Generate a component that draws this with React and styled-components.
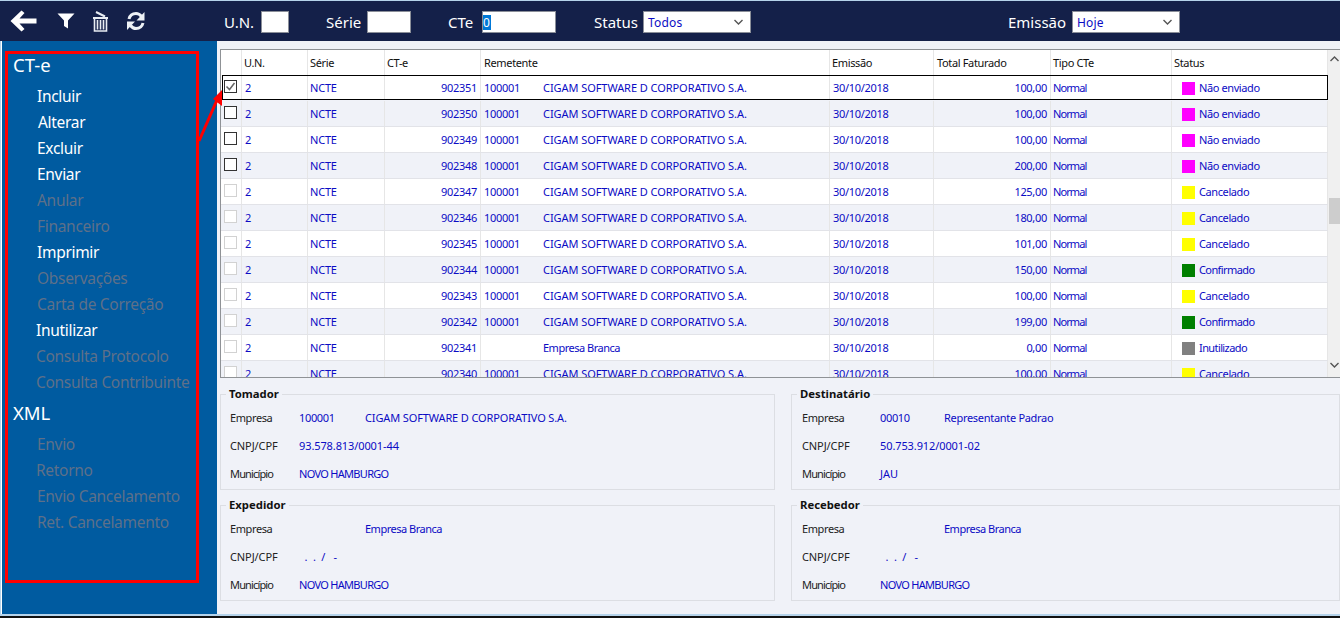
import React from 'react';
import styled, { createGlobalStyle } from 'styled-components';

const FONT = `"Noto Sans", "DejaVu Sans", sans-serif`;
const INK = '#0b0bc4';

const Global = createGlobalStyle`
  html, body { margin: 0; padding: 0; background: #000; }
  body { font-family: ${FONT}; overflow: hidden; }
  * { box-sizing: border-box; }
`;

const Win = styled.div`
  position: relative;
  width: 1340px;
  height: 618px;
  display: flex;
  flex-direction: column;
  background: #b5d3ea;
  padding-top: 1px;
  overflow: hidden;
`;
const Toolbar = styled.header`
  height: 40px;
  background: #142049;
  display: flex;
  align-items: center;
  flex: none;
`;
const IconBtn = styled.svg`
  flex: none;
  display: block;
  margin-left: ${p => p.$ml}px;
`;
const FilterGroup = styled.div`
  display: flex;
  align-items: center;
  gap: 6px;
  padding-top: 2px;
  margin-left: ${p => p.$ml}px;
`;
const FilterLabel = styled.span`
  color: #fff;
  font-size: 15px;
  line-height: 20px;
  width: ${p => p.$w}px;
  white-space: nowrap;
`;
const Field = styled.div`
  width: ${p => p.$w}px;
  height: 22px;
  background: #fff;
  border: 1px solid #8b8f99;
  display: flex;
  align-items: center;
  font-size: 12px;
  letter-spacing: 0.2px;
  color: ${INK};
`;
const Selected = styled.span`
  background: #0078d7;
  color: #fff;
  width: 8px;
  height: 15px;
  line-height: 15px;
`;
const SelectBox = styled(Field)`
  justify-content: space-between;
  padding: 0 7px 0 4px;
`;
const Body = styled.div`
  flex: 1;
  display: flex;
  min-height: 0;
  background: #fff;
  padding-left: 1px;
  border-left: 1px solid #b5d3ea;
`;
const Sidebar = styled.nav`
  width: 215px;
  flex: none;
  background: #005ba0;
  padding: 10px 0 0 3px;
`;
const Frame = styled.div`
  width: 194px;
  height: 532px;
  border: 3px solid #ff0000;
  padding: 0 0 0 5px;
  display: flex;
  flex-direction: column;
`;
const MenuHead = styled.div`
  color: #fff;
  font-size: 18.5px;
  line-height: 24px;
  margin-top: ${p => p.$mt}px;
  margin-bottom: 6px;
`;
const MenuItem = styled.div`
  height: 26px;
  line-height: 26px;
  font-size: 15.5px;
  letter-spacing: -0.3px;
  white-space: nowrap;
  margin-left: ${p => 24 + (p.$dx || 0)}px;
  color: ${p => (p.$off ? '#5e7089' : '#fff')};
`;
const Main = styled.main`
  flex: 1;
  min-width: 0;
  background: #f0f2f8;
  padding: 8px 0 0 3px;
`;
const GridFrame = styled.div`
  height: 329px;
  border: 1px solid #8f9296;
  border-right: 0;
  background: #fff;
  display: flex;
  overflow: hidden;
`;
const GridBody = styled.div`
  width: 1107px;
  flex: none;
  overflow: hidden;
`;
const COLS = '21px 66px 77px 96px 349px 104px 117px 121px 156px';
const HeadRow = styled.div`
  display: grid;
  grid-template-columns: ${COLS};
  height: 25px;
`;
const HeadCell = styled.div`
  font-size: 11px;
  line-height: 25px;
  letter-spacing: -0.35px;
  color: #111;
  padding-left: ${p => p.$pl}px;
  border-right: 1px solid #e6e6e6;
  white-space: nowrap;
`;
const Row = styled.div`
  display: grid;
  grid-template-columns: ${COLS};
  height: 26px;
  position: relative;
  background: ${p => (p.$alt ? '#f0f2f8' : '#fff')};
  border-bottom: 1px solid #e2e3e8;
  &[data-current='1'] {
    height: 25px;
    margin: 0 0 1px 1px;
    background: #fff;
    border-bottom: 0;
    outline: 1px solid #000;
    outline-offset: -1px;
    box-shadow: 0 1px 0 #f0f2f8;
    grid-template-columns: 20px 66px 77px 96px 349px 104px 117px 121px 156px;
  }
`;
const Cell = styled.div`
  font-size: 11px;
  line-height: 14px;
  color: ${INK};
  letter-spacing: ${p => p.$ls ?? -0.3}px;
  padding-top: 1px;
  padding-left: ${p => p.$pl}px;
  padding-right: ${p => p.$pr ?? 0}px;
  border-right: 1px solid #e6e6e6;
  white-space: nowrap;
  display: flex;
  align-items: center;
  justify-content: ${p => (p.$right ? 'flex-end' : 'flex-start')};
`;
const TickCell = styled.div`
  border-right: 1px solid #e6e6e6;
  padding: ${p => (p.$first ? '5px 0 0 2px' : '5px 0 0 3px')};
`;
const Tick = styled.span`
  width: 13px;
  height: 13px;
  background: #fff;
  border: 1px solid ${p => (p.$off ? '#d2d2d2' : '#333')};
  display: block;
`;
const Code = styled.span`
  display: inline-block;
  width: 59px;
  flex: none;
`;
const Name = styled.span`
  letter-spacing: ${p => p.$ls}px;
`;
const Swatch = styled.span`
  width: 13px;
  height: 13px;
  flex: none;
  margin-right: 4px;
  background: ${p => p.$c};
`;
const ScrollBar = styled.div`
  width: 12px;
  flex: none;
  background: #f0f0f0;
  display: flex;
  flex-direction: column;
  align-items: center;
  padding-top: 6px;
`;
const Thumb = styled.div`
  width: 11px;
  height: 26px;
  margin: 136px 0 138px 1px;
  background: #cdcdcd;
  flex: none;
`;
const Details = styled.div`
  display: grid;
  grid-template-columns: 555px 549px;
  column-gap: 16px;
  row-gap: 8px;
  margin-top: 9px;
`;
const Group = styled.fieldset`
  margin: 0;
  height: 103px;
  min-width: 0;
  border: 1px solid #dcdee3;
  padding: 10px 0 0 ${p => p.$pl}px;
`;
const GroupTitle = styled.legend`
  font-size: 11.3px;
  font-weight: 700;
  line-height: 14px;
  color: #111;
  padding: 0 3px;
  margin-left: ${p => p.$ml}px;
`;
const InfoRow = styled.div`
  display: grid;
  grid-template-columns: ${p => p.$c1}px ${p => p.$c2}px 1fr;
  height: 14px;
  margin-bottom: 14px;
  font-size: 11px;
  line-height: 14px;
  white-space: pre;
`;
const InfoLabel = styled.span`
  color: #222;
  letter-spacing: ${p => p.$ls}px;
`;
const InfoVal = styled.span`
  color: ${INK};
  letter-spacing: ${p => p.$ls ?? 0}px;
`;
const Overlay = styled.svg`
  position: absolute;
  left: 190px;
  top: 70px;
  pointer-events: none;
`;
const BottomEdge = styled.div`
  height: 4px;
  flex: none;
  background: linear-gradient(#b5d3ea 0 2px, #111 2px);
`;

const Arrow = () => (
  <IconBtn $ml={10} width="27" height="22" viewBox="0 0 27 22">
    <path fill="#fff" d="M11.5 0.5 L14.5 3 L9.5 8.5 H26.5 V13.5 H9.5 L14.5 19 L11.5 21.5 L0.5 11 Z" />
  </IconBtn>
);
const Funnel = () => (
  <IconBtn $ml={20} width="18" height="16" viewBox="0 0 18 16">
    <path fill="#fff" d="M0.5 0.5 H17.5 L11 7.5 V15.5 L7 13 V7.5 Z" />
  </IconBtn>
);
const Trash = () => (
  <IconBtn $ml={17} width="17" height="21" viewBox="0 0 17 21">
    <g fill="none" stroke="#e8ecf2">
      <path strokeWidth="2" d="M1 7 H16" />
      <path strokeWidth="2" d="M4 1 L13 5.5" />
      <path strokeWidth="1.6" d="M2.5 7 V20 H14.5 V7 M5.5 9 V18.5 M8.5 9 V18.5 M11.5 9 V18.5" />
    </g>
  </IconBtn>
);
const Refresh = () => (
  <IconBtn $ml={17} width="20" height="20" viewBox="0 0 20 20">
    <g fill="none" stroke="#eef2f6" strokeWidth="3">
      <path d="M3 8 C4 4 7 2.5 10 2.5 C12.5 2.5 14 3.5 15.5 5.5" />
      <path d="M17 12 C16 16 13 17.5 10 17.5 C7.5 17.5 6 16.5 4.5 14.5" />
    </g>
    <path fill="#eef2f6" d="M18.5 1 V9.5 H10.5 Z M1 19 V10.5 H9 Z" />
  </IconBtn>
);
const Chevron = ({ up, color = '#555' }) => (
  <svg width="9" height="6" viewBox="0 0 9 6" style={{ display: 'block', flex: 'none' }}>
    <path d={up ? 'M0.5 5 L4.5 1 L8.5 5' : 'M0.5 1 L4.5 5 L8.5 1'} fill="none" stroke={color} strokeWidth="1.4" />
  </svg>
);

const menu1 = [
  ['Incluir', 0, 0], ['Alterar', 0, 1], ['Excluir', 0, 0], ['Enviar', 0, 0],
  ['Anular', 1, 0], ['Financeiro', 1, 0], ['Imprimir', 0, 0], ['Observações', 1, 0],
  ['Carta de Correção', 1, 0], ['Inutilizar', 0, -1], ['Consulta Protocolo', 1, -1], ['Consulta Contribuinte', 1, -1],
];
const menu2 = [['Envio', 1, 0], ['Retorno', 1, -1], ['Envio Cancelamento', 1, 0], ['Ret. Cancelamento', 1, 0]];

const ST = {
  N: ['#ff00ff', 'Não enviado', -0.4],
  C: ['#ffff00', 'Cancelado', -0.4],
  F: ['#008000', 'Confirmado', -0.6],
  I: ['#808080', 'Inutilizado', -0.6],
};
const rows = [
  ['902351', '100,00', 'N', 1], ['902350', '100,00', 'N', 0], ['902349', '100,00', 'N', 0], ['902348', '200,00', 'N', 0],
  ['902347', '125,00', 'C', 0], ['902346', '180,00', 'C', 0], ['902345', '101,00', 'C', 0], ['902344', '150,00', 'F', 0],
  ['902343', '100,00', 'C', 0], ['902342', '199,00', 'F', 0], ['902341', '0,00', 'I', 0], ['902340', '100,00', 'C', 0],
];
const CIGAM = 'CIGAM SOFTWARE D CORPORATIVO S.A.';

const heads = [
  ['', 2], ['U.N.', 2], ['Série', 2], ['CT-e', 2], ['Remetente', 3],
  ['Emissão', 2], ['Total Faturado', 3], ['Tipo CTe', 2], ['Status', 2],
];

const blocks = [
  { t: 'Tomador', code: '100001', name: CIGAM, nameLs: -0.12, doc: '93.578.813/0001-44', city: 'NOVO HAMBURGO', cityLs: -0.7 },
  { t: 'Destinatário', code: '00010', name: 'Representante Padrao', nameLs: -0.3, doc: '50.753.912/0001-02', city: 'JAU', cityLs: 0 },
  { t: 'Expedidor', code: '', name: 'Empresa Branca', nameLs: -0.5, doc: '  .  .  /   -', city: 'NOVO HAMBURGO', cityLs: -0.7 },
  { t: 'Recebedor', code: '', name: 'Empresa Branca', nameLs: -0.5, doc: '  .  .  /   -', city: 'NOVO HAMBURGO', cityLs: -0.7 },
];

export default function App() {
  return (
    <Win>
      <Global />
      <Toolbar>
        <Arrow />
        <Funnel />
        <Trash />
        <Refresh />
        <FilterGroup $ml={78}><FilterLabel $w={31}>U.N.</FilterLabel><Field $w={28} /></FilterGroup>
        <FilterGroup $ml={37}><FilterLabel $w={35}>Série</FilterLabel><Field $w={44} /></FilterGroup>
        <FilterGroup $ml={37}><FilterLabel $w={28}>CTe</FilterLabel><Field $w={74}><Selected>0</Selected></Field></FilterGroup>
        <FilterGroup $ml={38}><FilterLabel $w={43}>Status</FilterLabel><SelectBox $w={108}>Todos<Chevron /></SelectBox></FilterGroup>
        <FilterGroup $ml={257}><FilterLabel $w={58}>Emissão</FilterLabel><SelectBox $w={108}>Hoje<Chevron /></SelectBox></FilterGroup>
      </Toolbar>
      <Body>
        <Sidebar>
          <Frame>
            <MenuHead $mt={-1}>CT-e</MenuHead>
            {menu1.map(([t, off, dx]) => <MenuItem key={t} $off={off} $dx={dx}>{t}</MenuItem>)}
            <MenuHead $mt={6}>XML</MenuHead>
            {menu2.map(([t, off, dx]) => <MenuItem key={t} $off={off} $dx={dx}>{t}</MenuItem>)}
          </Frame>
        </Sidebar>
        <Main>
          <GridFrame>
            <GridBody>
              <HeadRow>
                {heads.map(([h, pl], i) => <HeadCell key={i} $pl={pl}>{h}</HeadCell>)}
              </HeadRow>
              {rows.map(([id, total, st, checked], i) => {
                const first = i === 0;
                const blank = st === 'I';
                return (
                  <Row key={id} $alt={i % 2 === 1} data-current={first ? '1' : '0'}>
                    <TickCell $first={first}>
                      <Tick $off={i > 3}>
                        {checked ? (
                          <svg width="11" height="11" viewBox="0 0 11 11" style={{ display: 'block' }}>
                            <path d="M1.5 5.5 L4.5 8.5 L9.5 2" fill="none" stroke="#666" strokeWidth="1.5" />
                          </svg>
                        ) : null}
                      </Tick>
                    </TickCell>
                    <Cell $pl={3}>2</Cell>
                    <Cell $pl={2} $ls={-0.2}>NCTE</Cell>
                    <Cell $pl={0} $right $pr={3}>{id}</Cell>
                    <Cell $pl={3}>
                      <Code>{blank ? '' : '100001'}</Code>
                      <Name $ls={blank ? -0.5 : -0.06}>{blank ? 'Empresa Branca' : CIGAM}</Name>
                    </Cell>
                    <Cell $pl={3}>30/10/2018</Cell>
                    <Cell $pl={0} $right $pr={3}>{total}</Cell>
                    <Cell $pl={2} $ls={-0.9}>Normal</Cell>
                    <Cell $pl={10} $ls={ST[st][2]}><Swatch $c={ST[st][0]} />{ST[st][1]}</Cell>
                  </Row>
                );
              })}
            </GridBody>
            <ScrollBar>
              <Chevron up />
              <Thumb />
              <Chevron />
            </ScrollBar>
          </GridFrame>
          <Details>
            {blocks.map((b, i) => {
              const left = i % 2 === 0;
              const c1 = left ? 69 : 78;
              const c2 = left ? 66 : 64;
              return (
                <Group key={b.t} $pl={left ? 9 : 10}>
                  <GroupTitle $ml={left ? -4 : -5}>{b.t}</GroupTitle>
                  <InfoRow $c1={c1} $c2={c2}>
                    <InfoLabel $ls={-0.4}>Empresa</InfoLabel>
                    <InfoVal $ls={-0.35}>{b.code}</InfoVal>
                    <InfoVal $ls={b.nameLs}>{b.name}</InfoVal>
                  </InfoRow>
                  <InfoRow $c1={c1} $c2={c2}>
                    <InfoLabel $ls={-0.1}>CNPJ/CPF</InfoLabel>
                    <InfoVal $ls={-0.1}>{b.doc}</InfoVal>
                  </InfoRow>
                  <InfoRow $c1={c1} $c2={c2}>
                    <InfoLabel $ls={-0.85}>Município</InfoLabel>
                    <InfoVal $ls={b.cityLs}>{b.city}</InfoVal>
                  </InfoRow>
                </Group>
              );
            })}
          </Details>
        </Main>
      </Body>
      <Overlay width="40" height="80" viewBox="0 0 40 80">
        <path d="M9 71 L27 30" stroke="#ff0000" strokeWidth="3" fill="none" />
        <path d="M32 20 L32 36 L23 29 Z" fill="#ff0000" />
      </Overlay>
      <BottomEdge />
    </Win>
  );
}
